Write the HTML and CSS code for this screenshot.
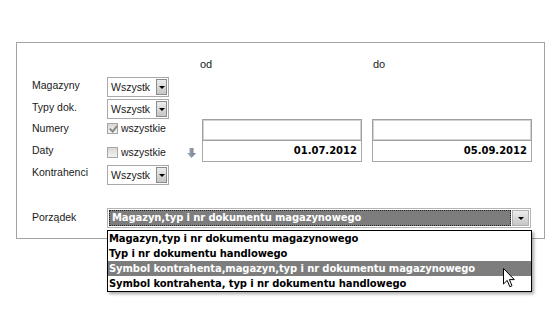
FILE: index.html
```html
<!DOCTYPE html>
<html lang="pl">
<head>
    <meta charset="UTF-8">
    <title>Zestawienie dokumentów</title>
    <link rel="stylesheet" href="styles.css">
</head>
<body>
    <div class="panel">
        <div class="filters">
            <span class="col-head od">od</span>
            <span class="col-head do">do</span>

            <span class="lbl row1">Magazyny</span>
            <div class="combo row1 ctrl">
                <span class="combo-text">Wszystk</span>
                <span class="combo-btn"></span>
            </div>

            <span class="lbl row2">Typy dok.</span>
            <div class="combo row2 ctrl">
                <span class="combo-text">Wszystk</span>
                <span class="combo-btn"></span>
            </div>

            <span class="lbl row3">Numery</span>
            <label class="check row3 ctrl">
                <span class="box checked"></span>
                wszystkie
            </label>

            <span class="lbl row4">Daty</span>
            <label class="check row4 ctrl">
                <span class="box"></span>
                wszystkie
            </label>
            <svg class="copy-arrow" width="9" height="10" viewBox="0 0 9 10">
                <defs>
                    <linearGradient id="ag" x1="0" y1="0" x2="1" y2="0">
                        <stop offset="0" stop-color="#a9b3bf"/>
                        <stop offset="1" stop-color="#6c7886"/>
                    </linearGradient>
                </defs>
                <path d="M2.5 0 H6.5 V5 H9 L4.5 10 L0 5 H2.5 Z" fill="url(#ag)"/>
            </svg>

            <div class="date-field from">
                <div class="num-box"></div>
                <div class="date-box">01.07.2012</div>
            </div>
            <div class="date-field to">
                <div class="num-box"></div>
                <div class="date-box">05.09.2012</div>
            </div>

            <span class="lbl row5">Kontrahenci</span>
            <div class="combo row5 ctrl">
                <span class="combo-text">Wszystk</span>
                <span class="combo-btn"></span>
            </div>
        </div>

        <div class="order-row">
            <span class="lbl">Porządek</span>
            <div class="order-wrap">
                <div class="combo order">
                    <span class="combo-text"><span class="focus">Magazyn,typ i nr dokumentu magazynowego</span></span>
                    <span class="combo-btn"></span>
                </div>
                <ul class="dropdown">
                    <li>Magazyn,typ i nr dokumentu magazynowego</li>
                    <li>Typ i nr dokumentu handlowego</li>
                    <li class="hover">Symbol kontrahenta,magazyn,typ i nr dokumentu magazynowego</li>
                    <li>Symbol kontrahenta, typ i nr dokumentu handlowego</li>
                </ul>
                <svg class="cursor" width="12" height="20" viewBox="0 0 12 20">
                    <path d="M0.5 0.5 V16 L4.2 12.4 L6.8 18.7 L9 17.8 L6.4 11.6 H11.3 Z" fill="#fff" stroke="#000" stroke-width="1" stroke-linejoin="miter"/>
                </svg>
            </div>
        </div>
    </div>
</body>
</html>
```

FILE: styles.css
```css
* {
    margin: 0;
    padding: 0;
    box-sizing: border-box;
}

html, body {
    min-height: 100vh;
}

body {
    background: #fff;
    font-family: "Liberation Sans", Arial, sans-serif;
    font-size: 10.5px;
    color: #1a1a1a;
    padding-top: 42px;
}

.panel {
    margin-left: 16px;
    width: 529px;
    border: 1px solid #a3a3a3;
    padding: 0 0 10px 15px;
}

/* gorna czesc - filtry */
.filters {
    display: grid;
    grid-template-columns: 75px 80px 15px 170px 159px;
    grid-template-rows: 34px 22px 20px 22px 21px 26px;
}

.col-head {
    grid-row: 1;
    margin-top: 14px;
    line-height: 14px;
    font-size: 11px;
}

.col-head.od {
    grid-column: 4;
    margin-left: -2px;
}

.col-head.do {
    grid-column: 5;
    margin-left: 1px;
}

.lbl {
    grid-column: 1;
    line-height: 14px;
    white-space: nowrap;
}

.ctrl {
    grid-column: 2;
    align-self: start;
}

.row1 { grid-row: 2; }
.row2 { grid-row: 3; }
.row3 { grid-row: 4; }
.row4 { grid-row: 5; }
.row5 { grid-row: 6; }

.lbl.row1 { margin-top: 1px; }
.lbl.row2 { margin-top: 1px; }
.lbl.row3 { margin-top: 2px; }
.lbl.row4 { margin-top: 2px; }
.lbl.row5 { margin-top: 3px; }

.combo.row5 { margin-top: 3px; }

/* combo */
.combo {
    display: flex;
    align-items: center;
    width: 62px;
    height: 20px;
    border: 1px solid #a9a9a9;
    background: #fff;
    padding: 1px;
}

.combo-text {
    flex: 1;
    overflow: hidden;
    white-space: nowrap;
    padding-left: 2px;
    line-height: 16px;
}

.combo-btn {
    flex: none;
    width: 11px;
    height: 16px;
    border: 1px solid #8c8c8c;
    background: linear-gradient(#ececec, #c6c6c6);
    display: flex;
    align-items: center;
    justify-content: center;
}

.combo-btn::after {
    content: '';
    border-left: 3px solid transparent;
    border-right: 3px solid transparent;
    border-top: 3px solid #000;
    margin-top: 1px;
}

/* checkbox */
.check {
    display: flex;
    align-items: center;
    gap: 3px;
    line-height: 14px;
}

.check.row3 { margin-top: 2px; }
.check.row4 { margin-top: 4px; }

.box {
    width: 11px;
    height: 11px;
    border: 1px solid #a6a6a6;
    background: linear-gradient(#d8d8d8, #f2f2f2);
    position: relative;
}

.box.checked::after {
    content: '';
    position: absolute;
    left: 3px;
    top: 0px;
    width: 3px;
    height: 6px;
    border-right: 2px solid #8a8a8a;
    border-bottom: 2px solid #8a8a8a;
    transform: rotate(40deg);
}

.copy-arrow {
    grid-column: 3;
    grid-row: 5;
    margin-top: 7px;
}

/* pola dat */
.date-field {
    grid-row: 4 / span 2;
    width: 160px;
    display: flex;
    flex-direction: column;
}

.date-field.from { grid-column: 4; }
.date-field.to { grid-column: 5; }

.num-box {
    height: 23px;
    border: 1px solid #a0a0a0;
    box-shadow: inset 0 0 0 1px #d2d2d2;
    background: #fff;
}

.date-box {
    height: 21px;
    border: 1px solid #a8a8a8;
    border-top: none;
    text-align: right;
    padding-right: 4px;
    font-family: "DejaVu Sans", Verdana, sans-serif;
    font-weight: bold;
    font-size: 10px;
    line-height: 20px;
    color: #000;
}

/* porzadek */
.order-row {
    display: flex;
    align-items: center;
    margin-top: 20px;
}

.order-row .lbl {
    width: 75px;
    margin-top: -2px;
}

.order-wrap {
    position: relative;
}

.combo.order {
    width: 424px;
    border-color: #b4b4b4;
}

.combo.order .combo-text {
    padding: 0;
    height: 16px;
    background: #7d7d7d;
    margin-right: 1px;
}

.focus {
    display: block;
    height: 16px;
    border: 1px dotted #222;
    padding-left: 2px;
    color: #fff;
    font-family: "DejaVu Sans", Verdana, sans-serif;
    font-weight: bold;
    font-size: 10px;
    letter-spacing: -0.1px;
    line-height: 14px;
}

.combo.order .combo-btn {
    width: 17px;
    border-color: #b0b0b0;
}

.dropdown {
    position: absolute;
    top: 22px;
    left: 0;
    width: 425px;
    list-style: none;
    background: #fff;
    border: 1px solid #000;
    box-shadow: 2px 2px 3px rgba(0, 0, 0, 0.35);
    font-family: "DejaVu Sans", Verdana, sans-serif;
    font-weight: bold;
    font-size: 10px;
    letter-spacing: -0.1px;
    color: #000;
    z-index: 5;
}

.dropdown li {
    height: 15px;
    line-height: 15px;
    padding-left: 1px;
    white-space: nowrap;
}

.dropdown li.hover {
    background: #7d7d7d;
    color: #fff;
}

.cursor {
    position: absolute;
    left: 396px;
    top: 60px;
    z-index: 6;
}
```
